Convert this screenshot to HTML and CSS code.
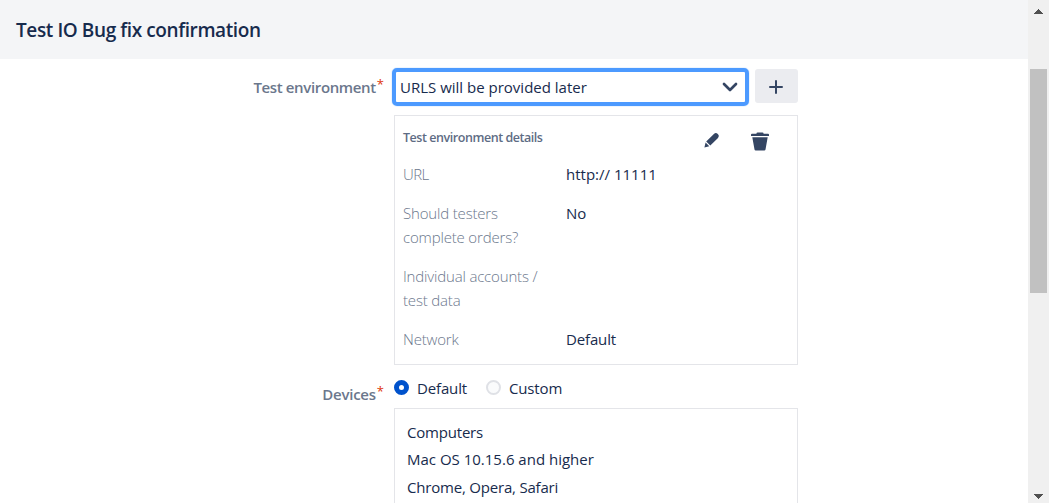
FILE: index.html
```html
<!DOCTYPE html>
<html lang="en">
<head>
<meta charset="utf-8">
<title>Test IO Bug fix confirmation</title>
<link rel="stylesheet" href="styles.css">
</head>
<body>
<div class="app">
  <div class="page">
    <header class="header"><h1 class="title">Test IO Bug fix confirmation</h1></header>
    <main class="form">
      <div class="label label-env"><span class="label-text">Test environment</span><span class="required">*</span></div>
      <div class="field">
        <div class="select-row">
          <div class="select">
            <span class="select-value">URLS will be provided later</span>
            <svg class="chevron" viewBox="0 0 16 10"><path d="M2 2l6 6 6-6"/></svg>
          </div>
          <button class="add" aria-label="Add"><svg class="plus" viewBox="0 0 14 14"><path d="M7 1v12M1 7h12"/></svg></button>
        </div>
        <section class="details">
          <div class="details-head">
            <h2 class="details-title">Test environment details</h2>
            <svg class="pencil" viewBox="0 0 16 16"><path d="M2.2 9.6 9.9 1.9Q11.9.2 13.8 2T14 5.9L6.3 13.6zM1.6 10.6l3.7 3.7L.4 15.5z"/></svg>
            <svg class="trash" viewBox="0 0 18 18"><path d="M0 2.2Q0 1.2 1 1.2H5.5V.7Q5.5 0 6.5 0H11.5Q12.5 0 12.5.7V1.2H17Q18 1.2 18 2.2V3.4H0zM1.3 4.8H16.7L14.5 17Q14.3 18 13.3 18H4.7Q3.7 18 3.5 17z"/></svg>
          </div>
          <dl class="facts">
            <dt class="term term-url">URL</dt><dd class="value">http:// 11111</dd>
            <dt class="term">Should testers<br>complete orders?</dt><dd class="value">No</dd>
            <dt class="term">Individual accounts /<br>test data</dt><dd class="value"></dd>
            <dt class="term">Network</dt><dd class="value value-network">Default</dd>
          </dl>
        </section>
      </div>
      <div class="label label-dev"><span class="label-text label-text-dev">Devices</span><span class="required">*</span></div>
      <div class="field">
        <div class="radios">
          <span class="radio radio-on"></span><span class="radio-label">Default</span>
          <span class="radio radio-off"></span><span class="radio-label">Custom</span>
        </div>
        <div class="devices">
          <div class="line">Computers</div>
          <div class="line line-os">Mac OS 10.15.6 and higher</div>
          <div class="line">Chrome, Opera, Safari</div>
        </div>
      </div>
    </main>
  </div>
  <div class="scrollbar">
    <svg class="arrow" viewBox="0 0 9 5" shape-rendering="crispEdges"><path d="M0 5 4.5 0 9 5z"/></svg>
    <div class="thumb"></div>
    <svg class="arrow" viewBox="0 0 9 5" shape-rendering="crispEdges"><path d="M0 0h9L4.5 5z"/></svg>
  </div>
</div>
</body>
</html>
```
FILE: styles.css
```css
* { box-sizing: border-box; }
body { margin: 0; background: #fff; color: #172b4d; font: 15px/24px "Open Sans", "Noto Sans", sans-serif; overflow: hidden; }
.app { display: flex; height: 503px; overflow: hidden; }
.page { flex: 1; }
.header { height: 59px; background: #f4f5f7; padding: 16px; }
.title { margin: 0; font-size: 19px; line-height: 28px; font-weight: 600; letter-spacing: -0.4px; white-space: nowrap; }
.form { display: grid; grid-template-columns: 384px 404px; column-gap: 10px; padding-top: 9px; white-space: nowrap; }
.label { display: flex; justify-content: flex-end; align-items: flex-start; color: #6b778c; font-weight: 600; }
.label-env { padding-top: 7px; }
.label-dev { padding-top: 17px; }
.label-text { letter-spacing: -0.36px; }
.label-text-dev { letter-spacing: -0.25px; }
.required { color: #de350b; font-weight: 400; font-size: 13px; line-height: 18px; margin-left: 1px; }
.select-row { display: flex; height: 38px; margin-left: -2px; }
.select { display: flex; align-items: center; justify-content: space-between; width: 357px; height: 38px; border: 4px solid #4c9aff; border-radius: 5px; box-shadow: 0 0 1px #4c9aff; padding: 0 7px 0 4px; }
.chevron { width: 16px; height: 10px; fill: none; stroke: #344563; stroke-width: 2.7; stroke-linecap: round; stroke-linejoin: round; }
.add { display: flex; align-items: center; justify-content: center; width: 43px; height: 34px; margin: 1px 0 0 6px; padding: 0; border: 0; border-radius: 3px; background: #ebecf0; }
.plus { width: 14px; height: 14px; margin: 2px 1px 0 0; fill: none; stroke: #344563; stroke-width: 2; stroke-linecap: round; }
.details { width: 404px; height: 250px; margin-top: 9px; border: 1px solid #e4e5e9; padding: 10px 8px; }
.details-head { display: flex; height: 36px; color: #344563; }
.details-title { width: 301px; margin: 0; color: #5e6c84; font-size: 12.5px; line-height: 24px; font-weight: 600; letter-spacing: -0.45px; }
.pencil { width: 16px; height: 16px; margin-top: 6px; fill: currentColor; }
.trash { width: 18px; height: 19px; margin: 6px 0 0 30.5px; fill: currentColor; }
.facts { display: grid; grid-template-columns: 163px 1fr; row-gap: 15px; margin: 0; }
.term { color: #6b778c; font-weight: 300; letter-spacing: -0.17px; }
.term-url { letter-spacing: -0.6px; }
.value { margin: 0; }
.value-network { letter-spacing: -0.15px; }
.radios { display: flex; align-items: center; height: 43px; }
.radio { width: 15px; height: 15px; border-radius: 50%; margin-top: 2px; }
.radio-on { border: 5px solid #0052cc; background: #fff; }
.radio-off { border: 2px solid #dfe1e6; background: #fafbfc; margin-left: 19px; }
.radio-label { margin: 3px 0 0 8px; letter-spacing: -0.15px; }
.devices { height: 160px; border: 1px solid #e4e5e9; padding: 10px 12px; line-height: 27.4px; letter-spacing: -0.2px; }
.line-os { letter-spacing: 0; }
.scrollbar { display: flex; flex-direction: column; align-items: center; width: 21px; background: #f0f0f0; padding: 9px 0 4px; }
.arrow { width: 9px; height: 5px; fill: #505050; }
.thumb { width: 17px; height: 224px; margin: 55px 0 auto; background: #c1c1c1; }
```
